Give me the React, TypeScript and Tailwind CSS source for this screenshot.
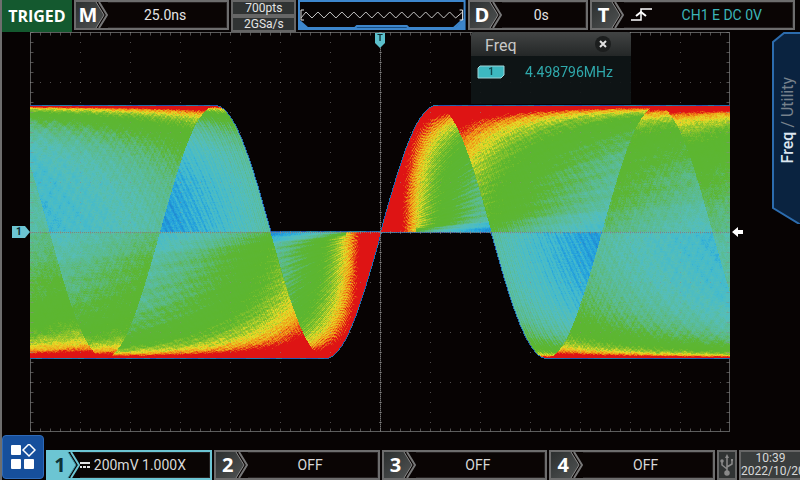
import { FC, ReactNode, useEffect, useRef } from "react";

const PLOT_WIDTH = 700;
const PLOT_HEIGHT = 400;
const CENTER_X = 351;
const CENTER_Y = 199.5;
const AMPLITUDE = 126;
const PERIOD = 221;

// Hit density -> colour, from rarely hit (blue) to often hit (red)
const PALETTE: [number, number, number, number][] = [
  [0, 26, 72, 170],
  [0.12, 28, 120, 205],
  [0.17, 36, 162, 220],
  [0.21, 66, 186, 206],
  [0.27, 86, 190, 184],
  [0.36, 92, 186, 134],
  [0.46, 92, 182, 52],
  [0.66, 92, 182, 46],
  [0.82, 150, 198, 44],
  [0.95, 228, 220, 40],
  [1.2, 240, 145, 22],
  [1.5, 222, 20, 20],
];

const colorFor = (value: number) => {
  for (let i = 1; i < PALETTE.length; i++) {
    const a = PALETTE[i - 1];
    const b = PALETTE[i];
    if (value < b[0]) {
      const t = (value - a[0]) / (b[0] - a[0]);
      return [1, 2, 3].map((c) => a[c] + (b[c] - a[c]) * t);
    }
  }
  return [222, 20, 20];
};

const noise = (x: number, y: number) => {
  const n = Math.sin(x * 12.9898 + y * 78.233) * 43758.5453;
  return n - Math.floor(n);
};

// Density of a sine sweep, all traces crossing zero at the trigger point
const densityAt = (px: number, py: number) => {
  const u = px + 0.5 - CENTER_X;
  const phase = (2 * Math.PI * Math.abs(u)) / PERIOD;
  const level = ((CENTER_Y - py) / AMPLITUDE) * Math.sign(u);
  if (Math.abs(level) >= 1) return 0;
  const base = Math.asin(level);
  let hits = 0;
  for (let k = 0; k < 5; k++) {
    const root = k * Math.PI + (k % 2 ? -base : base);
    if (root < 0 || root > phase) continue;
    const rate = root / phase;
    const fringe = 1 + 0.08 * Math.cos(rate * 420) + 0.05 * Math.cos(rate * 173);
    // The slowest traces are swept less often
    hits += fringe * (phase > 1 ? Math.min(1, 0.4 + rate * 14) : 1);
  }
  return hits / (phase * Math.sqrt(1 - level * level));
};

const Trace: FC = () => {
  const ref = useRef<HTMLCanvasElement>(null);

  useEffect(() => {
    const ctx = ref.current?.getContext("2d");
    if (!ctx) return;
    const image = ctx.createImageData(PLOT_WIDTH, PLOT_HEIGHT);
    const density = new Float32Array(PLOT_WIDTH * PLOT_HEIGHT);
    for (let y = 0; y < PLOT_HEIGHT; y++) {
      for (let x = 0; x < PLOT_WIDTH; x++) {
        density[y * PLOT_WIDTH + x] = densityAt(x, y);
      }
    }
    for (let y = 2; y < PLOT_HEIGHT - 2; y++) {
      for (let x = 0; x < PLOT_WIDTH; x++) {
        const i = y * PLOT_WIDTH + x;
        let rgb: number[];
        if (density[i] > 0) {
          const row = 1 + (noise(Math.floor(x / 9), y) - 0.5) * 0.07;
          const grain = 1 + (noise(x, y) - 0.5) * 0.14;
          rgb = colorFor(density[i] * row * grain);
        } else if (
          density[i - 1] > 0 ||
          density[i + 1] > 0 ||
          density[i - PLOT_WIDTH] > 0 ||
          density[i + PLOT_WIDTH] > 0
        ) {
          rgb = [32, 80 + noise(Math.floor(x / 6), y) * 50, 175];
        } else {
          continue;
        }
        image.data[i * 4] = rgb[0];
        image.data[i * 4 + 1] = rgb[1];
        image.data[i * 4 + 2] = rgb[2];
        image.data[i * 4 + 3] = 255;
      }
    }
    ctx.putImageData(image, 0, 0);
  }, []);

  return (
    <canvas
      ref={ref}
      width={PLOT_WIDTH}
      height={PLOT_HEIGHT}
      className="absolute inset-0 w-full h-full"
    />
  );
};

const Graticule: FC = () => {
  const columns = Array.from({ length: 13 }, (_, i) => (i + 1) * 50);
  const rows = Array.from({ length: 7 }, (_, i) => (i + 1) * 50);

  return (
    <svg
      viewBox="0 0 700 400"
      preserveAspectRatio="none"
      className="absolute inset-0 w-full h-full"
      fill="none"
      stroke="#8a8a8a"
    >
      <g strokeOpacity="0.55" strokeDasharray="1 9">
        {columns.map((x) => (
          <path key={x} d={`M${x + 0.5} 0V400`} />
        ))}
        {rows.map((y) => (
          <path key={y} d={`M0 ${y + 0.5}H700`} />
        ))}
        {/* Edge ticks */}
        <path d="M0 2H700M0 398H700M2 0V400M698 0V400" strokeWidth="3" />
      </g>
      {/* Center axes */}
      <path d="M350.5 0V400" stroke="#777777" strokeDasharray="1 1" />
      <path d="M350.5 0V400" stroke="#777777" strokeOpacity="0.5" />
      <path d="M0 200.5H700" stroke="#8c7474" strokeOpacity="0.8" strokeDasharray="1 1" />
      <path d="M350.5 0V400M0 200.5H700" strokeWidth="3" strokeOpacity="0.6" strokeDasharray="1 9" />
    </svg>
  );
};

type FieldProps = {
  label: string;
  children: ReactNode;
  active?: boolean;
};

const Field: FC<FieldProps> = ({ label, children, active = false }) => (
  <button
    className={`flex h-[30px] min-w-0 border-2 ${
      active ? "border-[#6cc5d3] bg-[#6cc5d3]" : "border-[#6d6d6d] bg-[#6d6d6d]"
    }`}
  >
    <span className="relative flex h-full w-8 shrink-0 items-center bg-[#0a0504]">
      <svg viewBox="0 0 32 26" preserveAspectRatio="none" className="absolute inset-0 h-full w-full">
        <defs>
          <linearGradient id="chip" x1="0" y1="0" x2="1" y2="1">
            <stop offset="0" stopColor="#2c2f2f" />
            <stop offset="1" stopColor="#505353" />
          </linearGradient>
        </defs>
        <path d="M0 0H20L28 13L20 26H0Z" fill={active ? "#6cc5d3" : "url(#chip)"} />
        <path d="M20 0L28 13L20 26" fill="none" stroke={active ? "#3c8d99" : "#8a8a8a"} />
        <path
          d="M23 0L31 13L23 26"
          fill="none"
          stroke={active ? "#6cc5d3" : "#777777"}
          strokeWidth="2"
        />
      </svg>
      <span
        className={`relative w-6 text-center font-['Open_Sans',sans-serif] text-xl leading-none font-bold ${
          active ? "text-[#0d3338]" : "text-white"
        }`}
      >
        {label}
      </span>
    </span>
    <span className="flex h-full min-w-0 flex-1 items-center justify-center border-y border-r border-[#242020] bg-[#0a0504] pr-1 whitespace-nowrap">
      {children}
    </span>
  </button>
);

const TopBar: FC = () => (
  <header className="grid h-[30px] grid-cols-[70fr_156fr_65fr_168fr_120fr_206fr_3fr] gap-x-0.5 text-sm text-[#e4e4e4]">
    <div className="flex items-center justify-center bg-[#14592f] font-['Open_Sans',sans-serif] text-base font-bold text-white">
      TRIGED
    </div>
    <Field label="M">25.0ns</Field>
    <div className="flex flex-col bg-[#0a0504] text-xs leading-none">
      <span className="flex flex-1 items-center justify-center border-2 border-[#666666] bg-[#303333]">
        700pts
      </span>
      <span className="flex flex-1 items-center justify-center border-2 border-[#666666] bg-[#303333]">
        2GSa/s
      </span>
    </div>
    {/* Memory overview */}
    <svg viewBox="0 0 168 30" preserveAspectRatio="none" className="h-[30px] w-full">
      <rect width="168" height="30" fill="#3d86cc" />
      <path d="M2 2H166V20L158 27H10L2 20Z" fill="#080404" />
      <path d="M57 28L59 26H109L111 28" fill="#174f86" stroke="#3d86cc" strokeWidth="2" />
      <path d="M156 28L166 19" stroke="#3d86cc" strokeWidth="2" />
      <path d="M6 10H3V20H6M162 10H165V20H162" fill="none" stroke="#e4e4e4" />
      <path
        d="M3 18L8 12L14 18L20 12L26 18L32 12L38 18L44 12L50 18L56 12L62 18L68 12L74 18L80 12L86 18L92 12L98 18L104 12L110 18L116 12L122 18L128 12L134 18L140 12L146 18L152 12L158 18L165 12"
        fill="none"
        stroke="#c8c8c8"
      />
    </svg>
    <Field label="D">0s</Field>
    <Field label="T">
      <svg width="24" height="16" viewBox="0 0 24 16" fill="none" stroke="#ffffff" className="mr-7 shrink-0">
        <path d="M1 13H11V2H22" strokeWidth="1.5" />
        <path d="M6 9L11 5L16 9" strokeWidth="2" />
      </svg>
      <span className="pr-5 text-[#3cb4b8]">CH1 E DC 0V</span>
    </Field>
  </header>
);

const FreqPanel: FC = () => (
  <section className="absolute top-0 left-[63%] w-40 rounded-t-sm bg-[#101617]/90">
    <div className="flex h-6 items-center justify-between rounded-t-sm bg-gradient-to-b from-[#424444] to-[#242727] pr-5 pl-3.5">
      <h2 className="pt-1 text-base leading-5 text-[#c8c8c8]">Freq</h2>
      <button aria-label="Close" className="flex h-4 w-4 items-center justify-center rounded-full bg-[#1c1e1e]">
        <svg width="8" height="8" viewBox="0 0 8 8" stroke="#e0e0e0" strokeWidth="2">
          <path d="M1 1L7 7M7 1L1 7" />
        </svg>
      </button>
    </div>
    <div className="flex h-12 items-start gap-5 pt-2 pl-1.5">
      <span className="relative flex h-4 w-7 items-center justify-center">
        <svg viewBox="0 0 28 16" className="absolute inset-0 h-full w-full">
          <path d="M3 2H27V11L24 14H1V4Z" fill="#3db8c0" stroke="#a0d4d8" />
        </svg>
        <span className="relative text-[10px] leading-none font-bold text-[#0f4a50]">1</span>
      </span>
      <span className="text-sm leading-4 text-[#2fa9ac]">4.498796MHz</span>
    </div>
  </section>
);

const SideTab: FC = () => (
  <button className="relative mt-0.5 flex h-48 w-7 items-center justify-end pl-1">
    <svg viewBox="0 0 28 192" preserveAspectRatio="none" className="absolute inset-0 h-full w-full">
      <path
        d="M29 1H12L1 10V176L29 193"
        fill="#0a2340"
        stroke="#2c6cae"
        strokeWidth="2"
      />
    </svg>
    <span className="relative rotate-180 pt-4 text-base leading-6 [writing-mode:vertical-rl]">
      <span className="font-medium text-[#dce6f0]">Freq</span>
      <span className="text-[#76818c]"> / Utility</span>
    </span>
  </button>
);

const Display: FC = () => (
  <main className="flex min-h-[300px] flex-1">
    {/* Channel marker */}
    <div className="flex w-7 items-center justify-end pt-0.5">
      <span className="relative flex h-3 w-[18px] items-center pl-1">
        <svg viewBox="0 0 18 12" className="absolute inset-0 h-full w-full">
          <path d="M0 0H13L18 6L13 12H0Z" fill="#6cc5d3" />
        </svg>
        <span className="relative text-[10px] leading-none font-bold text-[#0a2a30]">1</span>
      </span>
    </div>
    <div className="relative mt-0.5 flex-1 outline outline-offset-[-1px] outline-[#5c5c5c]">
      <Trace />
      <Graticule />
      {/* Trigger position */}
      <span className="absolute top-0 left-1/2 flex h-4 w-3 -translate-x-1/2 justify-center pt-0.5">
        <svg viewBox="0 0 12 16" className="absolute inset-0 h-full w-full">
          <path d="M1 1H11V11L6 16L1 11Z" fill="#5cc0cc" />
        </svg>
        <span className="relative text-[9px] leading-none font-bold text-[#0a2a30]">T</span>
      </span>
      <FreqPanel />
    </div>
    <div className="flex w-[70px] justify-between">
      <svg width="14" height="12" viewBox="0 0 14 12" className="mt-0.5 self-center">
        <path d="M2 6L8 1V4H13V8H8V11Z" fill="#ffffff" />
      </svg>
      <SideTab />
    </div>
  </main>
);

const BottomBar: FC = () => (
  <footer className="flex h-12 items-end gap-0.5 text-sm text-[#d8d8d8]">
    <button
      aria-label="Menu"
      className="mb-px flex h-11 w-[42px] shrink-0 items-center justify-center rounded-sm border border-[#2e6ab8] bg-[#164f9c]"
    >
      <svg width="26" height="26" viewBox="0 0 26 26" fill="#ffffff">
        <rect x="1" y="1" width="10" height="10" rx="1" />
        <rect x="1" y="15" width="10" height="10" rx="1" />
        <rect x="14" y="15" width="10" height="10" rx="1" />
        <path d="M19 0L25 6L19 12L13 6Z" fill="none" stroke="#ffffff" strokeWidth="1.5" />
      </svg>
    </button>
    <div className="grid min-w-0 flex-1 grid-cols-4 gap-0.5">
      <Field label="1" active>
        <svg width="11" height="6" viewBox="0 0 11 6" className="mr-1 shrink-0" stroke="#e4e4e4">
          <path d="M0 1H11" strokeWidth="2" />
          <path d="M0 5H3M4 5H7M8 5H11" strokeWidth="2" />
        </svg>
        <span className="pr-5">200mV 1.000X</span>
      </Field>
      <Field label="2">OFF</Field>
      <Field label="3">OFF</Field>
      <Field label="4">OFF</Field>
    </div>
    <div className="flex h-[30px] w-5 shrink-0 items-center justify-center border-2 border-[#666666] bg-[#303333]">
      <svg width="14" height="22" viewBox="0 0 14 22" fill="none" stroke="#8a8a8a" strokeWidth="1.5">
        <path d="M7 18V3M7 15L2 11V7M7 13L12 10V6" />
        <path d="M7 0L9 4H5Z" fill="#8a8a8a" stroke="none" />
        <circle cx="7" cy="19" r="2" fill="#8a8a8a" />
        <circle cx="2" cy="7" r="1" fill="#8a8a8a" />
        <path d="M11 5H13V7H11Z" fill="#8a8a8a" stroke="none" />
      </svg>
    </div>
    <div className="flex h-[30px] w-[61px] shrink-0 flex-col overflow-hidden border-y-2 border-l-2 border-[#666666] bg-[#3a3d3d] text-xs leading-[13px] whitespace-nowrap">
      <time className="text-center">10:39</time>
      <time>2022/10/20</time>
    </div>
  </footer>
);

const App: FC = () => {
  return (
    <div className="flex min-h-screen flex-col overflow-hidden border-l-2 border-[#6e6e6e] bg-[#070303] font-['Roboto',sans-serif]">
      <TopBar />
      <Display />
      <BottomBar />
    </div>
  );
};

export default App;
